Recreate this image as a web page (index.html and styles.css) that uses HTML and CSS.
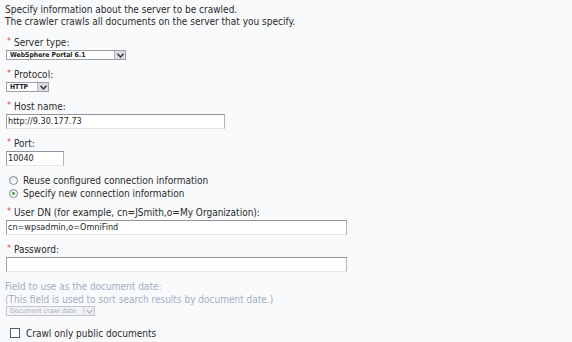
FILE: index.html
```html
<!DOCTYPE html>
<html>
<head>
<meta charset="utf-8">
<link rel="stylesheet" href="styles.css">
</head>
<body>
<div class="page">
  <p class="intro">Specify information about the server to be crawled.<br>The crawler crawls all documents on the server that you specify.</p>

  <div class="field f-server">
    <div class="label"><span class="req">*</span> Server type:</div>
    <div class="select w-server"><span class="sel-text">WebSphere Portal 6.1</span><span class="sel-btn"><svg width="7" height="5" viewBox="0 0 7 5"><path d="M0.5 0.8 L3.5 4 L6.5 0.8" fill="none" stroke="#333" stroke-width="1.4"/></svg></span></div>
  </div>

  <div class="field f-proto">
    <div class="label"><span class="req">*</span> Protocol:</div>
    <div class="select w-proto"><span class="sel-text">HTTP</span><span class="sel-btn"><svg width="7" height="5" viewBox="0 0 7 5"><path d="M0.5 0.8 L3.5 4 L6.5 0.8" fill="none" stroke="#333" stroke-width="1.4"/></svg></span></div>
  </div>

  <div class="field f-host">
    <div class="label"><span class="req">*</span> Host name:</div>
    <div class="input w-host">http://9.30.177.73</div>
  </div>

  <div class="field f-port">
    <div class="label"><span class="req">*</span> Port:</div>
    <div class="input w-port">10040</div>
  </div>

  <div class="radios">
    <div class="radio-row"><span class="radio"></span><span>Reuse configured connection information</span></div>
    <div class="radio-row"><span class="radio checked"></span><span>Specify new connection information</span></div>
  </div>

  <div class="field f-user">
    <div class="label"><span class="req">*</span> User DN (for example, cn=JSmith,o=My Organization):</div>
    <div class="input w-wide">cn=wpsadmin,o=OmniFind</div>
  </div>

  <div class="field f-pass">
    <div class="label"><span class="req">*</span> Password:</div>
    <div class="input w-wide"></div>
  </div>

  <div class="field f-date disabled">
    <div class="label dl">Field to use as the document date:</div>
    <div class="label dl">(This field is used to sort search results by document date.)</div>
    <div class="select w-date dis"><span class="sel-text">Document crawl date</span><span class="sel-btn"><svg width="7" height="5" viewBox="0 0 7 5"><path d="M0.5 0.8 L3.5 4 L6.5 0.8" fill="none" stroke="#b8bcc4" stroke-width="1.2"/></svg></span></div>
  </div>

  <div class="check-row"><span class="checkbox"></span><span>Crawl only public documents</span></div>
</div>
</body>
</html>
```

FILE: styles.css
```css
html, body {
  margin: 0;
  padding: 0;
  background: #f9fafc;
}
body {
  font-family: "DejaVu Sans Condensed", "DejaVu Sans", sans-serif;
  font-size: 10px;
  color: #2a2a2a;
}
.page {
  padding: 4px 0 0 5px;
}
.intro {
  margin: 0;
  line-height: 12px;
}
.field {
  display: flex;
  flex-direction: column;
  align-items: flex-start;
}
.label {
  line-height: 12px;
  height: 12px;
  white-space: nowrap;
}
.label.dl {
  line-height: 13px;
  height: 13px;
}
.req {
  color: #e0403a;
  font-size: 9px;
  position: relative;
  top: -2px;
  margin-left: 2px;
}
.f-server { margin-top: 9px; }
.f-proto { margin-top: 9px; }
.f-host { margin-top: 9px; }
.f-port { margin-top: 9px; }
.f-user { margin-top: 7px; }
.f-pass { margin-top: 9px; }
.f-date { margin-top: 8px; }

.select {
  display: flex;
  align-items: stretch;
  box-sizing: border-box;
  height: 10px;
  margin-top: 1px;
  margin-left: 1px;
  background: #fff;
  border: 1px solid #9a9ea6;
}
.f-date .select { margin-top: 0; }
.sel-text {
  flex: 1;
  font-family: "DejaVu Sans Condensed", "DejaVu Sans", sans-serif;
  font-size: 6.8px;
  font-weight: bold;
  line-height: 8px;
  padding-left: 3px;
  color: #222;
}
.sel-btn {
  width: 11px;
  box-sizing: border-box;
  background: #dcdee3;
  border-left: 1px solid #b5b8bf;
  display: flex;
  align-items: center;
  justify-content: center;
}
.w-server { width: 120px; }
.w-proto { width: 43px; }
.w-date { width: 89px; }
.select.dis {
  border-color: #c2c5cc;
  background: #f2f3f5;
}
.select.dis .sel-text {
  color: #adb1b9;
  font-weight: normal;
}
.select.dis .sel-btn {
  background: #eceef1;
  border-left-color: #d0d3d8;
}

.input {
  box-sizing: border-box;
  height: 15px;
  margin-top: 1px;
  margin-left: 1px;
  background: #fff;
  border: 1px solid #b8bbc0;
  border-top-color: #8f939a;
  border-left-color: #9a9ea5;
  border-bottom-color: #e4e6e9;
  border-right-color: #b0b3b8;
  font-size: 9px;
  line-height: 13px;
  padding-left: 1px;
  color: #1e1e1e;
}
.w-host { width: 219px; }
.w-port { width: 58px; }
.w-wide { width: 341px; }

.radios {
  margin-top: 8px;
  display: flex;
  flex-direction: column;
}
.radio-row {
  display: flex;
  align-items: center;
  height: 13px;
  gap: 5px;
  padding-left: 4px;
}
.radio {
  width: 9px;
  height: 9px;
  box-sizing: border-box;
  border-radius: 50%;
  border: 1px solid #7f8894;
  background: linear-gradient(#e4e7eb, #ffffff);
  display: flex;
  align-items: center;
  justify-content: center;
}
.radio.checked::after {
  content: "";
  width: 3px;
  height: 3px;
  border-radius: 50%;
  background: #3aa34a;
}

.disabled .label {
  color: #a5adbf;
}

.check-row {
  margin-top: 11px;
  display: flex;
  align-items: center;
  gap: 6px;
  padding-left: 5px;
  height: 12px;
}
.checkbox {
  width: 10px;
  height: 10px;
  box-sizing: border-box;
  border: 1px solid #4e5f78;
  background: #fff;
}
```
